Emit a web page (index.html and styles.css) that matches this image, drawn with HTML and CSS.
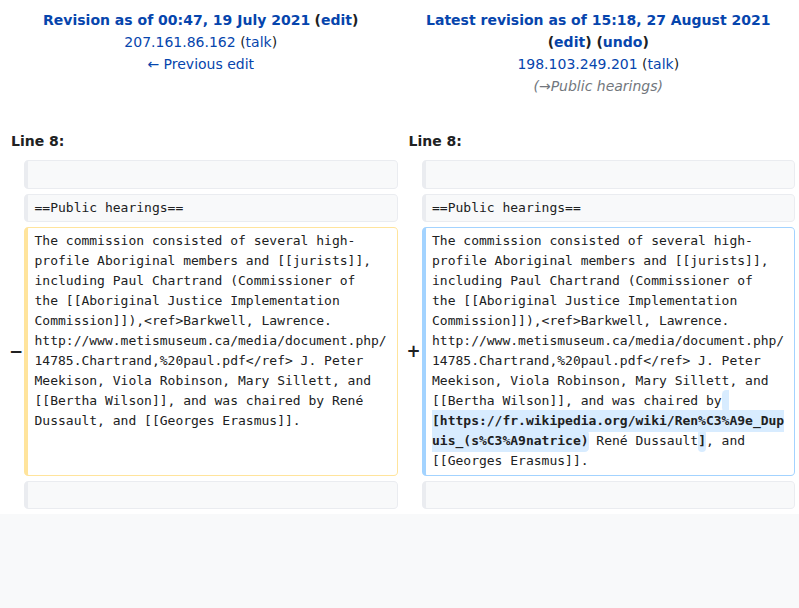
FILE: index.html
```html
<!DOCTYPE html>
<html lang="en">
<head>
<meta charset="utf-8">
<title>Diff</title>
<link rel="stylesheet" href="styles.css">
</head>
<body>
<div class="page">
  <div class="diff">
    <div class="title">
      <div><a class="strong" href="#">Revision as of 00:47, 19 July 2021</a> <span class="strong">(<a href="#">edit</a>)</span></div>
      <div><a href="#">207.161.86.162</a> (<a href="#">talk</a>)</div>
      <div><a href="#">← Previous edit</a></div>
    </div>
    <div class="title">
      <div><a class="strong" href="#">Latest revision as of 15:18, 27 August 2021</a> <span class="strong">(<a href="#">edit</a>) (<a href="#">undo</a>)</span></div>
      <div><a href="#">198.103.249.201</a> (<a href="#">talk</a>)</div>
      <div class="summary">(→Public hearings)</div>
    </div>

    <div class="lineno">Line 8:</div>
    <div class="lineno">Line 8:</div>

    <div class="marker"></div>
    <div class="line context"></div>
    <div class="marker"></div>
    <div class="line context"></div>

    <div class="marker"></div>
    <div class="line context">==Public hearings==</div>
    <div class="marker"></div>
    <div class="line context">==Public hearings==</div>

    <div class="marker">−</div>
    <div class="line deleted">The commission consisted of several high-profile Aboriginal members and [[jurists]], including Paul Chartrand (Commissioner of the [[Aboriginal Justice Implementation Commission]]),&lt;ref&gt;Barkwell, Lawrence. http://www.metismuseum.ca/media/document.php/14785.Chartrand,%20paul.pdf&lt;/ref&gt; J. Peter Meekison, Viola Robinson, Mary Sillett, and [[Bertha Wilson]], and was chaired by René Dussault, and [[Georges Erasmus]].</div>
    <div class="marker">+</div>
    <div class="line added">The commission consisted of several high-profile Aboriginal members and [[jurists]], including Paul Chartrand (Commissioner of the [[Aboriginal Justice Implementation Commission]]),&lt;ref&gt;Barkwell, Lawrence. http://www.metismuseum.ca/media/document.php/14785.Chartrand,%20paul.pdf&lt;/ref&gt; J. Peter Meekison, Viola Robinson, Mary Sillett, and [[Bertha Wilson]], and was chaired by<ins class="change"> [https://fr.wikipedia.org/wiki/Ren%C3%A9e_Dupuis_(s%C3%A9natrice)</ins> René Dussault<ins class="change">]</ins>, and [[Georges Erasmus]].</div>

    <div class="marker"></div>
    <div class="line context"></div>
    <div class="marker"></div>
    <div class="line context"></div>
  </div>
</div>
<div class="footer"></div>
</body>
</html>
```
FILE: styles.css
```css
html, body {
  margin: 0;
  padding: 0;
}
body {
  background: #ffffff;
  color: #202122;
  font-family: "DejaVu Sans", sans-serif;
  font-size: 14px;
  min-height: 100vh;
  display: flex;
  flex-direction: column;
}
.page {
  background: #ffffff;
}
.footer {
  background: #f8f9fa;
  flex: 1;
}
a {
  color: #0645ad;
  text-decoration: none;
}
.strong {
  font-weight: bold;
}
.diff {
  display: grid;
  grid-template-columns: 16px 1fr 16px 1fr;
  gap: 5px 4px;
  padding: 4px 4px 5px;
}
.title {
  grid-column: span 2;
  text-align: center;
  line-height: 22px;
  padding: 5px 4px 22px;
}
.summary {
  color: #72777d;
  font-style: italic;
}
.lineno {
  grid-column: span 2;
  font-weight: bold;
  line-height: 22px;
  padding: 6px 7px 3px;
}
.marker {
  align-self: center;
  text-align: right;
  font-weight: bold;
  font-size: 16.8px;
  line-height: 20px;
  margin-right: -3px;
  color: #202122;
}
.line {
  font-family: "DejaVu Sans Mono", monospace;
  font-size: 13px;
  line-height: 20px;
  white-space: break-spaces;
  overflow-wrap: break-word;
  border-style: solid;
  border-width: 1px 1px 1px 4px;
  border-radius: 4.3px;
  padding: 3.25px 6.5px;
  min-height: 20px;
  color: #202122;
  min-width: 0;
}
.context {
  background: #f8f9fa;
  border-color: #eaecf0;
}
.deleted {
  background: #ffffff;
  border-color: #ffe49c;
}
.added {
  background: #ffffff;
  border-color: #a3d3ff;
}
.change {
  text-decoration: none;
  font-weight: bold;
  background: #d8ecff;
  border-radius: 4.3px;
  padding: 3.25px 0;
}
```
